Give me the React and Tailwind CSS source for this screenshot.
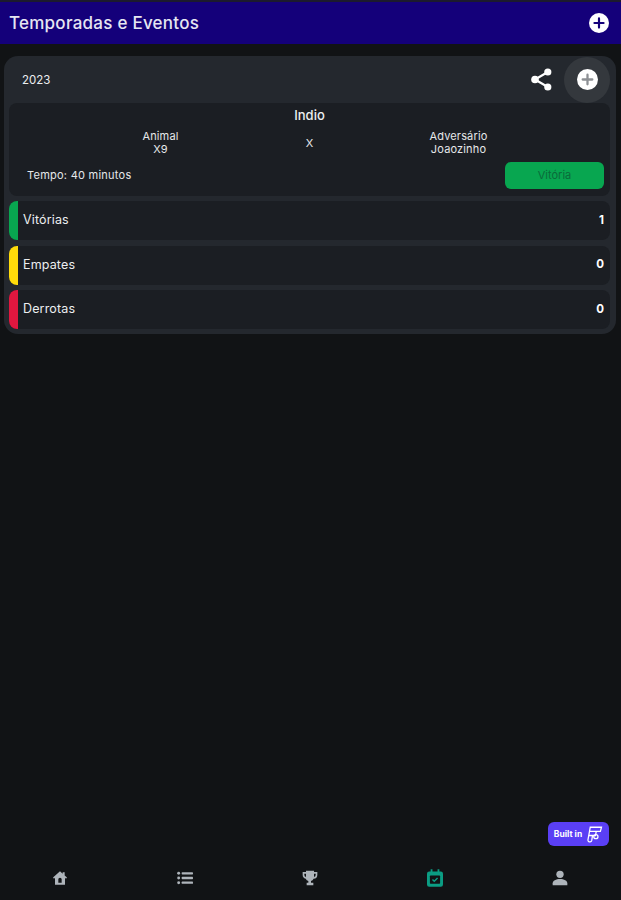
const FONT = 'font-["Inter","Liberation_Sans",sans-serif]'

// ── Icons ─────────────────────────────────────────────────────────────────────

function PlusCircle({ size, plus }) {
  return (
    <svg width={size} height={size} viewBox="0 0 24 24">
      <circle cx="12" cy="12" r="12" fill="#ffffff" />
      <path d="M12 6.500v11M6.500 12h11" stroke={plus} strokeWidth="2.600" strokeLinecap="round" />
    </svg>
  )
}

function ShareIcon() {
  return (
    <svg width="21" height="23" viewBox="0 0 21 23" fill="#ffffff">
      <circle cx="16.800" cy="4" r="3.600" />
      <circle cx="4" cy="11.500" r="3.800" />
      <circle cx="16.800" cy="19" r="3.600" />
      <path d="M16.800 4 4 11.500 16.800 19" fill="none" stroke="#ffffff" strokeWidth="2.200" />
    </svg>
  )
}

function HomeIcon() {
  return (
    <svg width="16" height="16" viewBox="0 0 24 24" fill="#aeb4ba">
      <path fillRule="evenodd" d="M12 2 1.500 11.200 3 13l1.500-1.200V22h15V11.800L21 13l1.500-1.800L19 8.100V3.500h-3v2L12 2Zm-2.500 12a2.500 2.500 0 0 1 5 0v5h-5v-5Z" />
    </svg>
  )
}

function ListIcon() {
  return (
    <svg width="16" height="14" viewBox="0 0 24 20" fill="#aeb4ba">
      <circle cx="2.500" cy="3" r="2.200" />
      <circle cx="2.500" cy="10" r="2.200" />
      <circle cx="2.500" cy="17" r="2.200" />
      <rect x="7" y="1.200" width="17" height="3.600" rx="1" />
      <rect x="7" y="8.200" width="17" height="3.600" rx="1" />
      <rect x="7" y="15.200" width="17" height="3.600" rx="1" />
    </svg>
  )
}

function TrophyIcon() {
  return (
    <svg width="16" height="16" viewBox="0 0 24 24" fill="#aeb4ba">
      <path fillRule="evenodd" d="M6 1h12v2h5v4a6 6 0 0 1-5.600 6 6 6 0 0 1-3.900 3.400V19H17v4H7v-4h2.500v-2.600A6 6 0 0 1 5.600 13 6 6 0 0 1 1 7V3h5V1ZM3.500 5.500V7a3.500 3.500 0 0 0 2.500 3.400V5.500H3.500Zm17 0H18v4.900A3.500 3.500 0 0 0 20.500 7V5.500Z" />
    </svg>
  )
}

function CalendarIcon() {
  return (
    <svg width="16" height="18" viewBox="0 0 22 24">
      <path d="M5 0h2.500v3h7V0H17v3h2a3 3 0 0 1 3 3v15a3 3 0 0 1-3 3H3a3 3 0 0 1-3-3V6a3 3 0 0 1 3-3h2V0Z" fill="#0b9d83" />
      <rect x="4" y="8.500" width="14" height="11.500" rx="1" fill="#111315" />
      <path d="m7.500 14 2.500 2.500 4.500-4.500" fill="none" stroke="#0b9d83" strokeWidth="2" />
    </svg>
  )
}

function UserIcon() {
  return (
    <svg width="16" height="16" viewBox="0 0 24 24" fill="#aeb4ba">
      <circle cx="12" cy="6.500" r="5.500" />
      <path d="M1 23v-3c0-4 5-6.500 11-6.500S23 16 23 20v3H1Z" />
    </svg>
  )
}

function BuiltInMark() {
  return (
    <svg width="18" height="18" viewBox="0 0 24 24" fill="none" stroke="#ffffff" strokeWidth="1.700">
      <path d="M7 3h15l-1.500 5.500H6zM6 8.500h9l-1 5.500H5zM5 14h5l-1 6.500a2.500 2.500 0 0 1-5-1z" />
      <circle cx="14.500" cy="15.500" r="2.800" />
    </svg>
  )
}

// ── Pieces ────────────────────────────────────────────────────────────────────

function StatRow({ label, value, bar }) {
  return (
    <div className="h-[39px] flex items-center rounded-lg bg-[#1b1e23] pr-[6px]">
      <div className={`w-[9px] h-full rounded-l-lg ${bar}`} />
      <span className="ml-[5px] text-[12.500px] tracking-[0.15px] text-[#eceef0]">{label}</span>
      <span className="ml-auto text-[11.500px] font-bold text-white">{value}</span>
    </div>
  )
}

const NAV = [
  <HomeIcon key="home" />,
  <ListIcon key="list" />,
  <TrophyIcon key="trophy" />,
  <CalendarIcon key="calendar" />,
  <UserIcon key="user" />,
]

export default function App() {
  return (
    <div className={`relative h-[900px] overflow-hidden flex flex-col bg-[#111315] text-white ${FONT}`}>

      {/* Title bar */}
      <div className="border-t-2 border-[#1c1a2e] h-11 shrink-0 flex items-center justify-between pl-[9px] pr-[12px] bg-[#14007a]">
        <h1 className="mt-[2px] text-[17px] font-medium text-[#e6e6f2] tracking-[0.25px]">Temporadas e Eventos</h1>
        <PlusCircle size={20} plus="#14007a" />
      </div>

      {/* Season card */}
      <div className="ml-1 mr-[5px] mt-3 rounded-[14px] bg-[#24282e] pl-[5px] pr-[6px] pb-[5px]">
        <div className="h-[47px] flex items-center pl-[13px]">
          <span className="mt-[2px] text-[11.500px] text-[#eceef0]">2023</span>
          <div className="ml-auto mr-[12px]"><ShareIcon /></div>
          <div className="w-[46px] h-[46px] rounded-full bg-[#34383d] flex items-center justify-center">
            <PlusCircle size={21} plus="#8d9094" />
          </div>
        </div>

        {/* Match */}
        <div className="h-[93px] rounded-lg bg-[#1b1e23] flex flex-col pt-[5px] pl-[18px] pr-[6px]">
          <p className="text-center text-[13px] font-medium text-[#eceef0] leading-[14px] -ml-[12px]">Indio</p>
          <div className="mt-[8px] grid grid-cols-[149px_149px_149px] justify-center text-center text-[11px] tracking-[0.15px] leading-[13px] text-[#e6e8ea] -ml-[12px]">
            <div>
              <p>Animal</p>
              <p>X9</p>
            </div>
            <div className="flex items-center justify-center">X</div>
            <div>
              <p>Adversário</p>
              <p>Joaozinho</p>
            </div>
          </div>
          <div className="mt-[6px] flex items-center justify-between">
            <span className="text-[11px] tracking-[0.25px] text-[#e6e8ea]">Tempo: 40 minutos</span>
            <button className="w-[99px] h-[27px] rounded-md bg-[#08a650] text-[11px] text-[#0b6a3a]">Vitória</button>
          </div>
        </div>

        {/* Totals */}
        <div className="mt-[5px] flex flex-col gap-[5.500px]">
          <StatRow label="Vitórias" value="1" bar="bg-[#08a650]" />
          <StatRow label="Empates" value="0" bar="bg-[#fedb0a]" />
          <StatRow label="Derrotas" value="0" bar="bg-[#e0173f]" />
        </div>
      </div>

      {/* Bottom navigation */}
      <nav className="mt-auto h-11 pr-[2px] grid grid-cols-[repeat(5,125px)] justify-center items-center">
        {NAV.map((icon, i) => (
          <div key={i} className="flex justify-center">{icon}</div>
        ))}
      </nav>

      {/* Built in badge */}
      <div className="absolute left-[548px] top-[822px] w-[61px] h-[24px] rounded-md bg-[#5a3ff5] flex items-center justify-center gap-[3px]">
        <span className="text-[8.500px] font-bold text-white">Built in</span>
        <BuiltInMark />
      </div>
    </div>
  )
}
